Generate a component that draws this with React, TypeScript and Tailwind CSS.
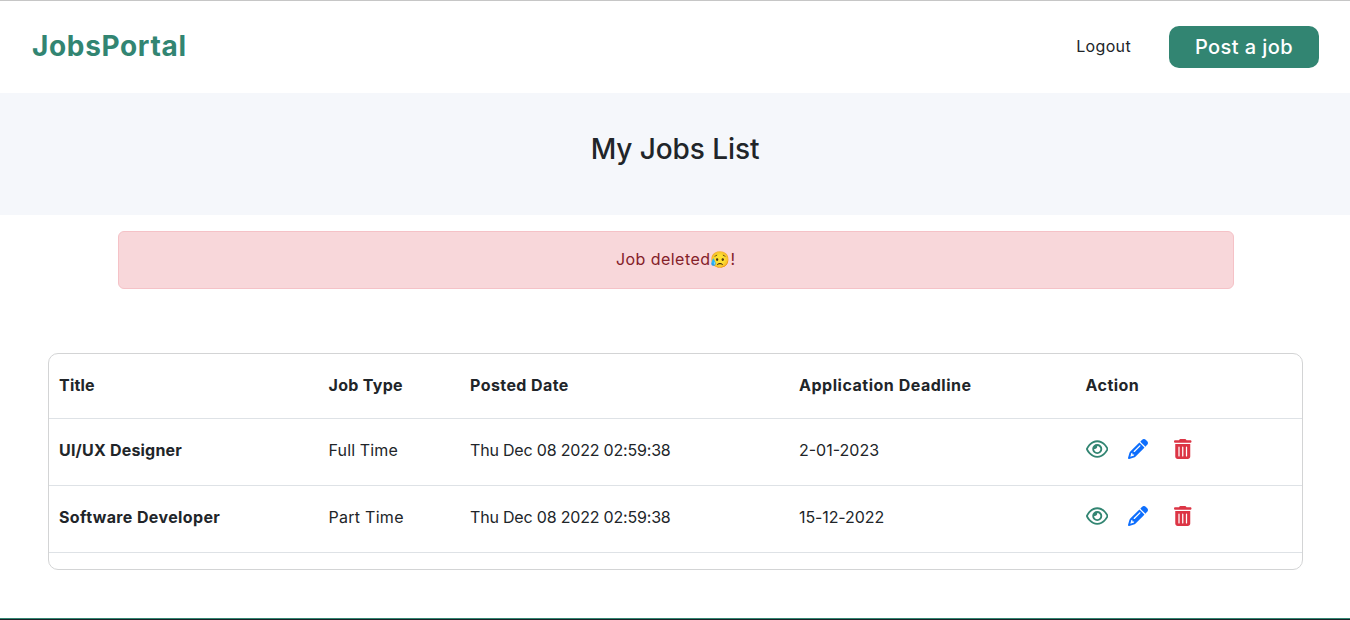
import { FaPencil, FaRegEye, FaTrashCan } from "react-icons/fa6";

const jobs = [
  {
    title: "UI/UX Designer",
    titleTracking: "tracking-[0.2px]",
    type: "Full Time",
    typeTracking: "tracking-[0.15px]",
    posted: "Thu Dec 08 2022 02:59:38",
    deadline: "2-01-2023",
    deadlineTracking: "tracking-normal",
  },
  {
    title: "Software Developer",
    titleTracking: "tracking-[0.38px]",
    type: "Part Time",
    typeTracking: "tracking-[0.28px]",
    posted: "Thu Dec 08 2022 02:59:38",
    deadline: "15-12-2022",
    deadlineTracking: "tracking-[-0.1px]",
  },
];

const columns = "grid grid-cols-[269.5px_141.5px_329px_286.5px_1fr] items-center pl-[10px]";

function Header() {
  return (
    <header className="flex h-[93px] items-center justify-between border-t border-[#c6c6c6] pl-8 pr-[31px]">
      <a className="pb-[2px] text-[28px] font-bold leading-none tracking-[0.65px] text-[#328572]">JobsPortal</a>
      <nav className="flex items-center gap-[38px]">
        <a className="pb-[2px] tracking-[0.35px]">Logout</a>
        <button className="flex h-[42px] w-[150px] items-center justify-center rounded-[10px] bg-[#328572] text-xl font-medium tracking-[0.42px] text-white">
          Post a job
        </button>
      </nav>
    </header>
  );
}

function JobsTable() {
  return (
    <section className="ml-12 mr-[47px] mt-16 h-[217px] rounded-[10px] border border-[#d3d4d5]">
      <div className={`${columns} h-[65px] border-b border-[#dee2e6] pb-[2px] font-bold`}>
        <span className="tracking-[0.2px]">Title</span>
        <span className="tracking-[0.3px]">Job Type</span>
        <span className="tracking-[0.42px]">Posted Date</span>
        <span className="tracking-[0.52px]">Application Deadline</span>
        <span className="tracking-[0.45px]">Action</span>
      </div>
      {jobs.map((job) => (
        <div key={job.title} className={`${columns} h-[67px] border-b border-[#dee2e6] pb-1`}>
          <span className={`font-bold ${job.titleTracking}`}>{job.title}</span>
          <span className={job.typeTracking}>{job.type}</span>
          <span className="tracking-[-0.19px]">{job.posted}</span>
          <span className={job.deadlineTracking}>{job.deadline}</span>
          <span className="flex items-center pb-[2px]">
            <FaRegEye className="h-5 w-[22.5px] text-[#328572]" />
            <FaPencil className="ml-[19.5px] h-5 w-5 text-[#0d6efd]" />
            <FaTrashCan className="ml-[26.5px] h-5 w-[17.5px] text-[#dc3545]" />
          </span>
        </div>
      ))}
    </section>
  );
}

export default function App() {
  return (
    <div className="flex h-[620px] flex-col overflow-hidden bg-white font-['Inter',sans-serif] text-base text-[#212529]">
      <Header />
      <div className="flex h-[122px] justify-center bg-[#f5f7fb] pt-[35px]">
        <h1 className="text-[28px] font-medium leading-[42px] tracking-[-0.08px]">My Jobs List</h1>
      </div>
      <div className="ml-[118px] mr-[116px] mt-4 flex h-[58px] items-center justify-center rounded-md border border-[#f5c2c7] bg-[#f8d7da] pb-[2px] pr-px text-[#842029]">
        <span className="tracking-[0.45px]">Job deleted</span>
        <span className="text-base leading-none">😥</span>!
      </div>
      <JobsTable />
      <footer className="mt-auto h-[2px] border-t border-[#328572] bg-[#1a1f24]" />
    </div>
  );
}
